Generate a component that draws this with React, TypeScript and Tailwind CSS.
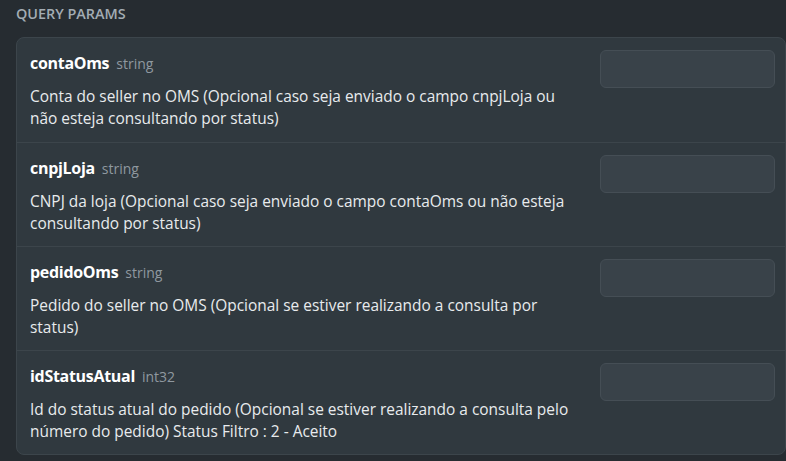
import React from "react";

const params = [
  {
    name: "contaOms",
    type: "string",
    desc: "Conta do seller no OMS (Opcional caso seja enviado o campo cnpjLoja ou não esteja consultando por status)",
  },
  {
    name: "cnpjLoja",
    type: "string",
    desc: "CNPJ da loja (Opcional caso seja enviado o campo contaOms ou não esteja consultando por status)",
  },
  {
    name: "pedidoOms",
    type: "string",
    desc: "Pedido do seller no OMS (Opcional se estiver realizando a consulta por status)",
  },
  {
    name: "idStatusAtual",
    type: "int32",
    desc: "Id do status atual do pedido (Opcional se estiver realizando a consulta pelo número do pedido) Status Filtro : 2 - Aceito",
  },
];

export default function App() {
  return (
    <div
      className="w-[786px] h-[461px] bg-[#262c31] pl-4 pt-[4px] overflow-hidden"
      style={{ fontFamily: '"Open Sans", sans-serif' }}
    >
      <div className="text-[14.4px] font-semibold text-[#a3acb4] leading-[20px] h-[33px]">
        QUERY PARAMS
      </div>
      <div className="w-[770px] bg-[#30393f] border border-[#3c454b] rounded-[8px]">
        {params.map((p, i) => (
          <div
            key={p.name}
            className={`flex h-[104px] pl-[13px] pr-[10px] pt-3 ${i > 0 ? "border-t border-[#3c454b]" : ""}`}
          >
            <div className="w-[560px] flex flex-col">
              <div className="flex items-baseline gap-[7px] mt-[2px] leading-[22px]">
                <span className="text-[16px] font-bold text-white tracking-[-0.3px]">{p.name}</span>
                <span className="text-[14px] text-[#8f989f]">{p.type}</span>
              </div>
              <div className="mt-[10px] text-[15.45px] leading-[22px] text-[#e8ebed] w-[556px]">{p.desc}</div>
            </div>
            <div className="ml-auto">
              <div className="w-[175px] h-[38px] rounded-[6px] bg-[#394249] border border-[#454e55]" />
            </div>
          </div>
        ))}
      </div>
    </div>
  );
}
